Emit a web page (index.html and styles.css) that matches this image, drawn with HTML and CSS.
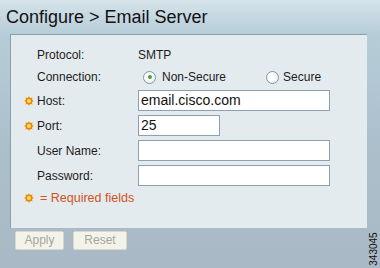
FILE: index.html
```html
<!DOCTYPE html>
<html>
<head>
<meta charset="utf-8">
<link rel="stylesheet" href="styles.css">
</head>
<body>
<div class="page">
  <h1 class="title">Configure &gt; Email Server</h1>
  <div class="panel">
    <div class="form">
      <span class="star"></span><span class="label">Protocol:</span><span class="value">SMTP</span>

      <span class="star"></span><span class="label">Connection:</span>
      <span class="value radios">
        <span class="radio checked"></span><span class="rtext">Non-Secure</span>
        <span class="radio second"></span><span class="rtext">Secure</span>
      </span>

      <span class="star"><svg class="req" viewBox="0 0 10 10" width="10" height="10"><g fill="#f08600"><circle cx="5" cy="5" r="3.5"/><path d="M5 0 L6.1 2.6 L3.9 2.6Z M5 10 L6.1 7.4 L3.9 7.4Z M0 5 L2.6 3.9 L2.6 6.1Z M10 5 L7.4 3.9 L7.4 6.1Z M1.3 1.3 L3.7 2.4 L2.4 3.7Z M8.7 1.3 L7.6 3.7 L6.3 2.4Z M1.3 8.7 L2.4 6.3 L3.7 7.6Z M8.7 8.7 L6.3 7.6 L7.6 6.3Z"/></g><circle cx="5" cy="5" r="2" fill="#ffdc66"/></svg></span><span class="label">Host:</span><span class="value"><span class="input wide">email.cisco.com</span></span>

      <span class="star"><svg class="req" viewBox="0 0 10 10" width="10" height="10"><g fill="#f08600"><circle cx="5" cy="5" r="3.5"/><path d="M5 0 L6.1 2.6 L3.9 2.6Z M5 10 L6.1 7.4 L3.9 7.4Z M0 5 L2.6 3.9 L2.6 6.1Z M10 5 L7.4 3.9 L7.4 6.1Z M1.3 1.3 L3.7 2.4 L2.4 3.7Z M8.7 1.3 L7.6 3.7 L6.3 2.4Z M1.3 8.7 L2.4 6.3 L3.7 7.6Z M8.7 8.7 L6.3 7.6 L7.6 6.3Z"/></g><circle cx="5" cy="5" r="2" fill="#ffdc66"/></svg></span><span class="label">Port:</span><span class="value"><span class="input narrow">25</span></span>

      <span class="star"></span><span class="label">User Name:</span><span class="value"><span class="input wide"></span></span>

      <span class="star"></span><span class="label">Password:</span><span class="value"><span class="input wide"></span></span>

      <span class="star"><svg class="req" viewBox="0 0 10 10" width="10" height="10"><g fill="#f08600"><circle cx="5" cy="5" r="3.5"/><path d="M5 0 L6.1 2.6 L3.9 2.6Z M5 10 L6.1 7.4 L3.9 7.4Z M0 5 L2.6 3.9 L2.6 6.1Z M10 5 L7.4 3.9 L7.4 6.1Z M1.3 1.3 L3.7 2.4 L2.4 3.7Z M8.7 1.3 L7.6 3.7 L6.3 2.4Z M1.3 8.7 L2.4 6.3 L3.7 7.6Z M8.7 8.7 L6.3 7.6 L7.6 6.3Z"/></g><circle cx="5" cy="5" r="2" fill="#ffdc66"/></svg></span><span class="required">= Required fields</span>
    </div>
  </div>
  <div class="buttons">
    <span class="btn apply">Apply</span>
    <span class="btn reset">Reset</span>
  </div>
  <span class="fignum">343045</span>
</div>
</body>
</html>
```
FILE: styles.css
```css
html, body {
  margin: 0;
  padding: 0;
}
body {
  width: 380px;
  height: 268px;
  overflow: hidden;
  font-family: "Liberation Sans", Arial, sans-serif;
  background: linear-gradient(to bottom, #d6e3ea 0px, #b6cdd8 34px, #abbfcb 150px, #a9b9c5 268px);
}
.page {
  position: relative;
  width: 380px;
  height: 268px;
}
.title {
  margin: 0;
  padding: 7px 0 0 6px;
  height: 27px;
  font-size: 18px;
  font-weight: normal;
  color: #111;
  line-height: 21px;
}
.panel {
  margin-left: 10px;
  width: 356px;
  height: 193px;
  border: 1px solid #8b9eaa;
  border-right: none;
  border-bottom: none;
  background: #e4ebef;
  box-sizing: content-box;
}
.form {
  display: grid;
  grid-template-columns: 12px 102px 1fr;
  grid-template-rows: 22px 22px 25px 25px 25px 25px 20px;
  align-items: center;
  padding: 9px 0 0 13px;
  font-size: 12px;
  color: #1c1c1c;
}
.star {
  display: flex;
  align-items: center;
  height: 10px;
}
.req {
  display: block;
  width: 10px;
  height: 10px;
}
.label {
  line-height: 14px;
  padding-left: 1px;
}
.value {
  line-height: 14px;
  display: flex;
  align-items: center;
}
.radios {
  padding-left: 5px;
}
.radio {
  width: 11px;
  height: 11px;
  border: 1px solid #7f95a6;
  border-radius: 50%;
  background: radial-gradient(circle at 40% 40%, #ffffff 30%, #dfe6ea 100%);
  display: flex;
  align-items: center;
  justify-content: center;
  margin-right: 6px;
}
.radio.checked::after {
  content: "";
  width: 4px;
  height: 4px;
  border-radius: 50%;
  background: #3fa33a;
}
.radio.second {
  margin-left: 40px;
  margin-right: 4px;
}
.input {
  box-sizing: border-box;
  height: 21px;
  border: 1px solid #8da1b1;
  background: #fff;
  font-size: 14px;
  line-height: 19px;
  padding-left: 2px;
  color: #111;
}
.input.wide {
  width: 192px;
}
.input.narrow {
  width: 82px;
}
.required {
  grid-column: 2 / 4;
  padding-left: 4px;
  color: #d0531c;
  font-size: 12.5px;
  line-height: 14px;
}
.buttons {
  display: flex;
  gap: 9px;
  padding: 3px 0 0 15px;
}
.btn {
  box-sizing: border-box;
  height: 19px;
  border: 1px solid #d7d8cb;
  border-radius: 2px;
  background: #f3f3ea;
  color: #a6a6a0;
  font-size: 12px;
  line-height: 17px;
  text-align: center;
}
.apply {
  width: 49px;
}
.reset {
  width: 54px;
}
.fignum {
  position: absolute;
  left: 357px;
  top: 244px;
  width: 34px;
  height: 10px;
  font-size: 10px;
  line-height: 10px;
  text-align: center;
  color: #111;
  transform: rotate(-90deg);
}
```
